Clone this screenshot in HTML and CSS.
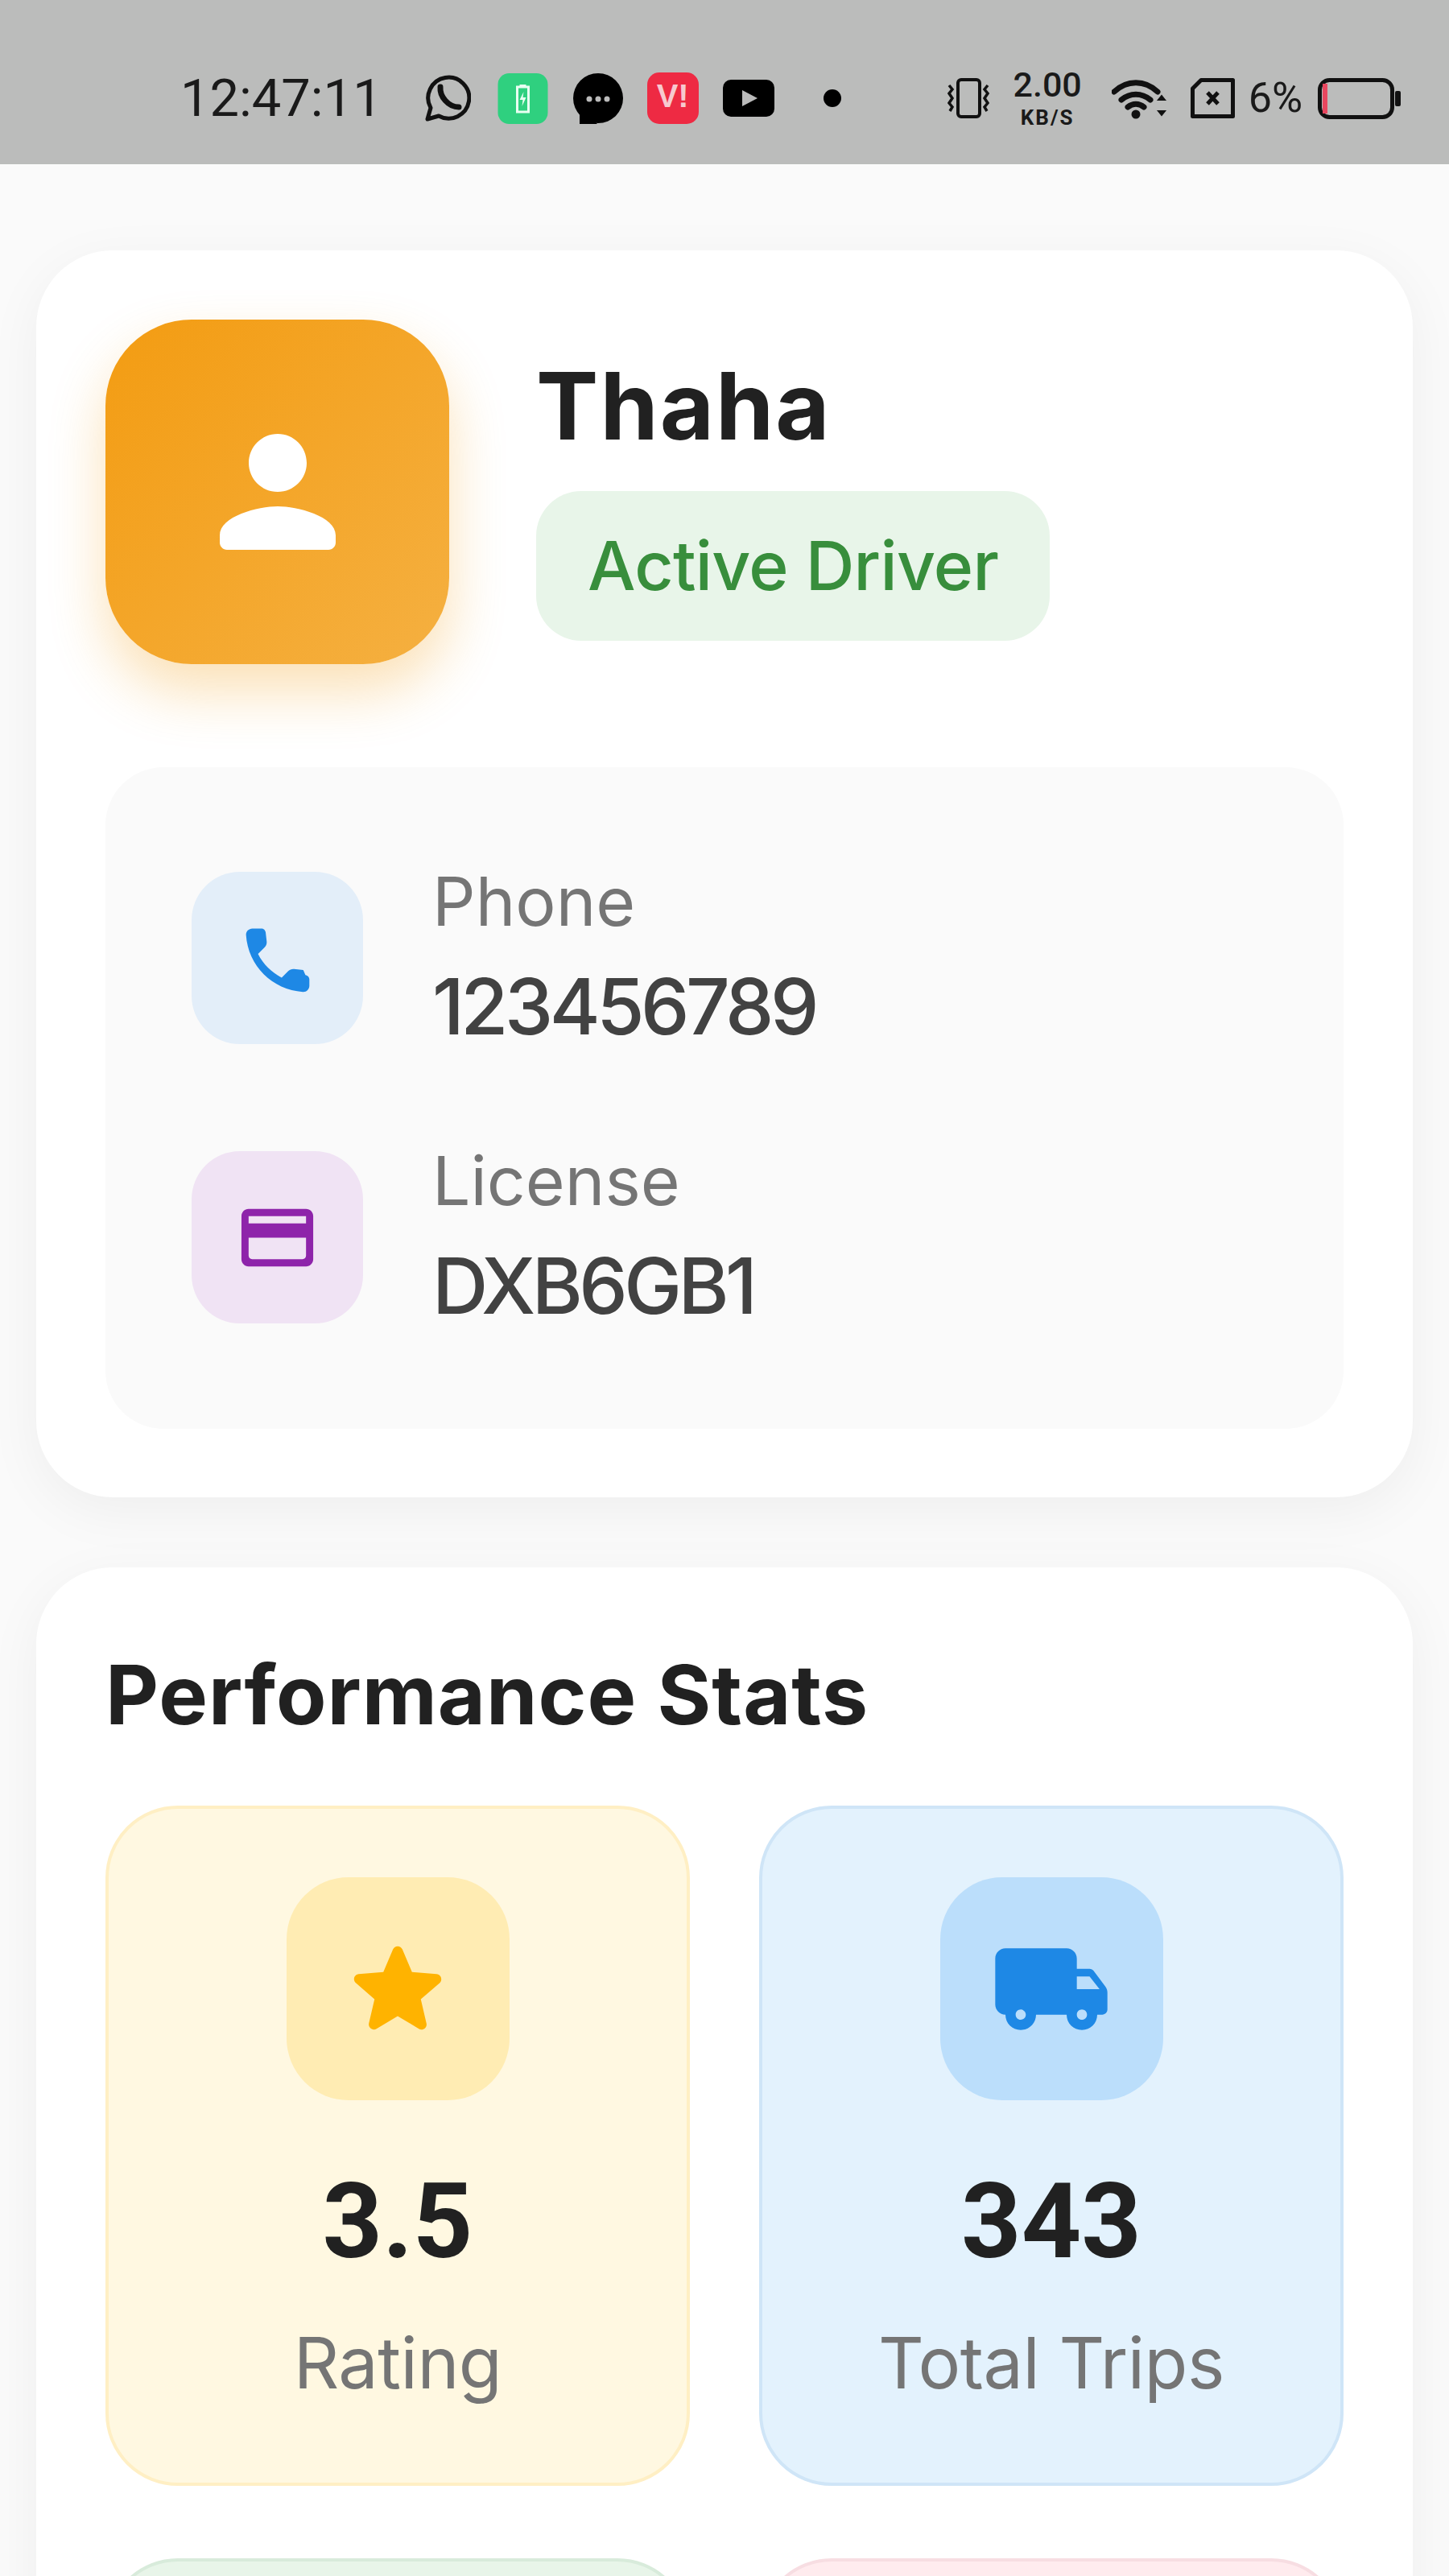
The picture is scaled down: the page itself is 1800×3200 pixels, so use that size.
FILE: index.html

```html
<!DOCTYPE html>
<html lang="en">
<head>
  <meta charset="UTF-8">
  <meta name="viewport" content="width=device-width, initial-scale=1.0">
  <title>Driver Profile</title>
  <link rel="stylesheet" href="styles.css">
</head>
<body>
  <div class="statusbar">
    <div class="status-left">
      <span class="clock">12:47:11</span>
      <svg class="sb-icon whatsapp" viewBox="0 0 58 60"><path d="M4 56l4-14A25.500 25.500 0 1 1 18 52z" fill="none" stroke="#111" stroke-width="5" stroke-linejoin="round"/><path d="M20 16c-1 12 10 25 23 25" fill="none" stroke="#111" stroke-width="7" stroke-linecap="round"/></svg>
      <svg class="sb-icon square" viewBox="0 0 62 63"><rect width="62" height="63" rx="14" fill="#2fd07f"/><path d="M24 17h14v31H24z" fill="none" stroke="#e8fff2" stroke-width="3"/><path d="M27 14h8v3h-8z" fill="#e8fff2"/><path d="M32 23l-5 10h4l-1 8 5-11h-4z" fill="#e8fff2"/></svg>
      <svg class="sb-icon square" viewBox="0 0 63 63"><circle cx="32" cy="31" r="31" fill="#000"/><path d="M9 42v21h22z" fill="#000"/><circle cx="21" cy="32" r="3.500" fill="#bbb"/><circle cx="32" cy="32" r="3.500" fill="#bbb"/><circle cx="43" cy="32" r="3.500" fill="#bbb"/></svg>
      <span class="vi">V!</span>
      <svg class="sb-icon youtube" viewBox="0 0 64 46"><rect width="64" height="46" rx="10" fill="#000"/><path d="M24 13l19 10-19 10z" fill="#bbb"/></svg>
      <span class="dot"></span>
    </div>
    <div class="status-right">
      <svg class="sb-icon vibrate" viewBox="0 0 57 50"><rect x="15" y="2" width="27" height="46" rx="4" fill="none" stroke="#111" stroke-width="4"/><path d="M4 9l4 5-4 5 4 6-4 6 4 5-3 5M52 9l-4 5 4 5-4 6 4 6-4 5 3 5" fill="none" stroke="#111" stroke-width="3.500"/></svg>
      <div class="speed"><span class="speed-num">2.00</span><span class="speed-unit">KB/S</span></div>
      <svg class="sb-icon wifi" viewBox="0 0 71 51"><path d="M3 17c16-15 38-15 54 0M12 27c11-9 25-9 36 0M20 36c6-5 14-5 20 0" fill="none" stroke="#111" stroke-width="7" stroke-linecap="round"/><circle cx="30" cy="45" r="5.500" fill="#111"/><path d="M66 27l-4-5-4 5zM58 41l4 5 4-5z" fill="#111" stroke="#111" stroke-width="2"/></svg>
      <svg class="sb-icon sim" viewBox="0 0 55 50"><path d="M2.500 13L13 2.500h39.500v45h-50z" fill="none" stroke="#111" stroke-width="5" stroke-linejoin="round"/><path d="M21 18l13 14M34 18L21 32" stroke="#111" stroke-width="5"/></svg>
      <span class="percent">6%</span>
      <svg class="sb-icon battery" viewBox="0 0 103 51"><rect x="2.500" y="2.500" width="90" height="46" rx="12" fill="none" stroke="#111" stroke-width="5"/><rect x="6" y="7" width="6" height="37" fill="#e8475f"/><rect x="96" y="16" width="7" height="19" rx="2" fill="#111"/></svg>
    </div>
  </div>

  <div class="content">
    <div class="card profile-card">
      <div class="profile-head">
        <div class="avatar">
          <svg class="avatar-icon" viewBox="0 0 24 24"><path d="M12 12c2.210 0 4-1.790 4-4s-1.790-4-4-4-4 1.790-4 4 1.790 4 4 4zm0 2c-2.670 0-8 1.340-8 4v1c0 .55.45 1 1 1h14c.55 0 1-.45 1-1v-1c0-2.660-5.330-4-8-4z"/></svg>
        </div>
        <div class="profile-text">
          <div class="name">Thaha</div>
          <span class="badge">Active Driver</span>
        </div>
      </div>

      <div class="info-panel">
        <div class="info-row">
          <div class="info-icon info-blue">
            <svg viewBox="0 0 24 24"><path d="M19.230 15.260l-2.540-.29c-.61-.07-1.210.14-1.640.57l-1.840 1.840c-2.830-1.440-5.150-3.750-6.590-6.590l1.850-1.850c.43-.43.64-1.030.57-1.640l-.29-2.520c-.07-.61-.59-1.070-1.210-1.070H5.030c-.98 0-1.800.82-1.740 1.800.53 8.510 7.340 15.310 15.840 15.840.98.06 1.800-.76 1.800-1.740v-1.730c.01-.61-.45-1.130-1.100-1.220z"/></svg>
          </div>
          <div>
            <div class="info-label">Phone</div>
            <div class="info-value">123456789</div>
          </div>
        </div>
        <div class="info-row">
          <div class="info-icon info-purple">
            <svg viewBox="0 0 24 24"><path d="M20 4H4c-1.110 0-1.990.89-1.990 2L2 18c0 1.110.89 2 2 2h16c1.110 0 2-.89 2-2V6c0-1.110-.89-2-2-2zm-1 14H5c-.55 0-1-.45-1-1v-5h16v5c0 .55-.45 1-1 1zm1-10H4V6h16v2z"/></svg>
          </div>
          <div>
            <div class="info-label">License</div>
            <div class="info-value">DXB6GB1</div>
          </div>
        </div>
      </div>
    </div>

    <div class="card stats-card">
      <h2 class="stats-title">Performance Stats</h2>
      <div class="stats-grid">
        <div class="stat stat-yellow">
          <div class="stat-icon">
            <svg viewBox="0 0 24 24"><path d="M12 17.270l4.150 2.510c.76.46 1.690-.22 1.490-1.080l-1.100-4.720 3.670-3.180c.67-.58.31-1.680-.57-1.750l-4.830-.41-1.890-4.460c-.34-.81-1.500-.81-1.840 0L9.190 8.630l-4.830.41c-.88.07-1.240 1.170-.57 1.750l3.670 3.180-1.100 4.720c-.2.860.73 1.540 1.490 1.080l4.150-2.500z"/></svg>
          </div>
          <div class="stat-value">3.5</div>
          <div class="stat-label">Rating</div>
        </div>
        <div class="stat stat-blue">
          <div class="stat-icon">
            <svg viewBox="0 0 24 24"><path d="M19.500 8H17V6c0-1.100-.9-2-2-2H3c-1.100 0-2 .9-2 2v9c0 1.100.9 2 2 2 0 1.660 1.340 3 3 3s3-1.340 3-3h6c0 1.660 1.340 3 3 3s3-1.340 3-3h1c.55 0 1-.45 1-1v-3.330c0-.43-.14-.85-.4-1.200L20.300 8.400c-.19-.25-.49-.4-.8-.4zM6 18c-.55 0-1-.45-1-1s.45-1 1-1 1 .45 1 1-.45 1-1 1zm13.500-8.500l1.960 2.500H17V9.500h2.500zM18 18c-.55 0-1-.45-1-1s.45-1 1-1 1 .45 1 1-.45 1-1 1z"/></svg>
          </div>
          <div class="stat-value">343</div>
          <div class="stat-label">Total Trips</div>
        </div>
        <div class="stat stat-green"></div>
        <div class="stat stat-pink"></div>
      </div>
    </div>
  </div>
</body>
</html>
```

FILE: styles.css

```css
html, body { margin: 0; height: 3200px; overflow: hidden; }
body { font-family: Inter, "Noto Sans", sans-serif; background: #fafafa; color: #212121; }

.statusbar { height: 204px; background: #bbbcbb; display: flex; align-items: center; justify-content: space-between; padding: 40px 60px 0 224px; box-sizing: border-box; }
.status-left, .status-right { display: flex; align-items: center; }
.status-left { gap: 30px; }
.sb-icon { display: block; flex: none; }
.clock { font-family: Roboto, sans-serif; font-size: 65px; line-height: 1; color: #1a1a1a; margin-right: 22px; }
.whatsapp { width: 58px; height: 60px; margin-right: 3px; }
.square { width: 63px; height: 63px; }
.vi { width: 64px; height: 64px; border-radius: 15px; background: #ee2a43; color: #f7c9cf; font: 700 40px/58px "Liberation Sans", sans-serif; text-align: center; }
.youtube { width: 64px; height: 46px; }
.dot { width: 22px; height: 22px; border-radius: 50%; background: #000; margin-left: 31px; }
.vibrate { width: 57px; height: 50px; margin-right: 26px; }
.speed { width: 87px; margin-right: 36px; display: flex; flex-direction: column; align-items: center; color: #1a1a1a; font-family: Roboto, sans-serif; }
.speed-num { font-size: 43px; line-height: 49px; font-weight: 500; }
.speed-unit { font-size: 26px; line-height: 33px; font-weight: 700; letter-spacing: 2px; }
.wifi { width: 71px; height: 51px; margin-right: 27px; }
.sim { width: 55px; height: 50px; margin-right: 17px; }
.percent { font-family: Roboto, sans-serif; font-size: 52px; line-height: 1; color: #1a1a1a; margin-right: 19px; }
.battery { width: 103px; height: 51px; }

.content { padding: 107px 45px 0; display: flex; flex-direction: column; gap: 87px; }
.card { background: white; border-radius: 95px; box-shadow: 0 17px 68px rgba(0,0,0,0.05); }
.profile-card { padding: 86px; height: 1549px; box-sizing: border-box; }
.profile-head { display: flex; align-items: center; gap: 108px; }
.avatar { width: 427px; height: 428px; border-radius: 107px; background: linear-gradient(135deg, #f39c12, #f5b041); box-shadow: 0 34px 68px rgba(243,156,18,0.3); display: flex; align-items: center; justify-content: center; }
.avatar-icon { width: 216px; height: 216px; fill: white; }
.profile-text { padding-top: 8px; }
.name { font-size: 116px; font-weight: 700; line-height: 140px; letter-spacing: 2px; color: #212121; }
.badge { display: inline-block; margin-top: 36px; padding: 0 64px; height: 186px; line-height: 186px; border-radius: 56px; background: #e8f5e9; color: #388e3c; font-size: 84px; font-weight: 500; letter-spacing: -0.7px; }

.info-panel { margin-top: 128px; height: 822px; box-sizing: border-box; padding: 130px 107px; background: #fafafa; border-radius: 72px; display: flex; flex-direction: column; gap: 133px; }
.info-row { display: flex; align-items: center; gap: 86px; height: 214px; }
.info-icon { width: 213px; height: 214px; border-radius: 60px; display: flex; align-items: center; justify-content: center; }
.info-icon svg { width: 107px; height: 107px; }
.info-blue { background: #e3eef9; fill: #1e88e5; }
.info-purple { background: #f0e3f4; fill: #8e24aa; }
.info-label { font-size: 84px; line-height: 120px; color: #757575; font-weight: 400; }
.info-value { font-size: 96px; line-height: 141px; color: #424242; font-weight: 500; letter-spacing: -4.500px; }

.stats-card { padding: 86px 86px 0; height: 1400px; box-sizing: border-box; }
.stats-title { margin: 0 0 66px; font-size: 102px; line-height: 144px; font-weight: 700; letter-spacing: 1px; color: #212121; }
.stats-grid { display: grid; grid-template-columns: 726px 726px; gap: 90px 86px; }
.stat { height: 845px; box-sizing: border-box; border: 4px solid; border-radius: 90px; padding-top: 85px; display: flex; flex-direction: column; align-items: center; }
.stat-icon { width: 277px; height: 277px; border-radius: 77px; display: flex; align-items: center; justify-content: center; }
.stat-icon svg { width: 152px; height: 152px; }
.stat-value { margin-top: 76px; font-family: Roboto, sans-serif; font-size: 130px; line-height: 150px; font-weight: 700; color: #212121; }
.stat-label { margin-top: 40px; font-size: 88px; line-height: 120px; font-weight: 400; color: #757575; letter-spacing: -0.5px; }
.stat-yellow { background: #fff8e1; border-color: #ffefc4; }
.stat-yellow .stat-icon { background: #ffecb3; fill: #ffb300; }
.stat-blue { background: #e3f2fd; border-color: #cfe5f7; }
.stat-blue .stat-icon { background: #bbdefb; fill: #1e88e5; }
.stat-green { background: #e8f5e9; border-color: #d8ebdb; }
.stat-pink { background: #ffebee; border-color: #f7dde2; }
```
